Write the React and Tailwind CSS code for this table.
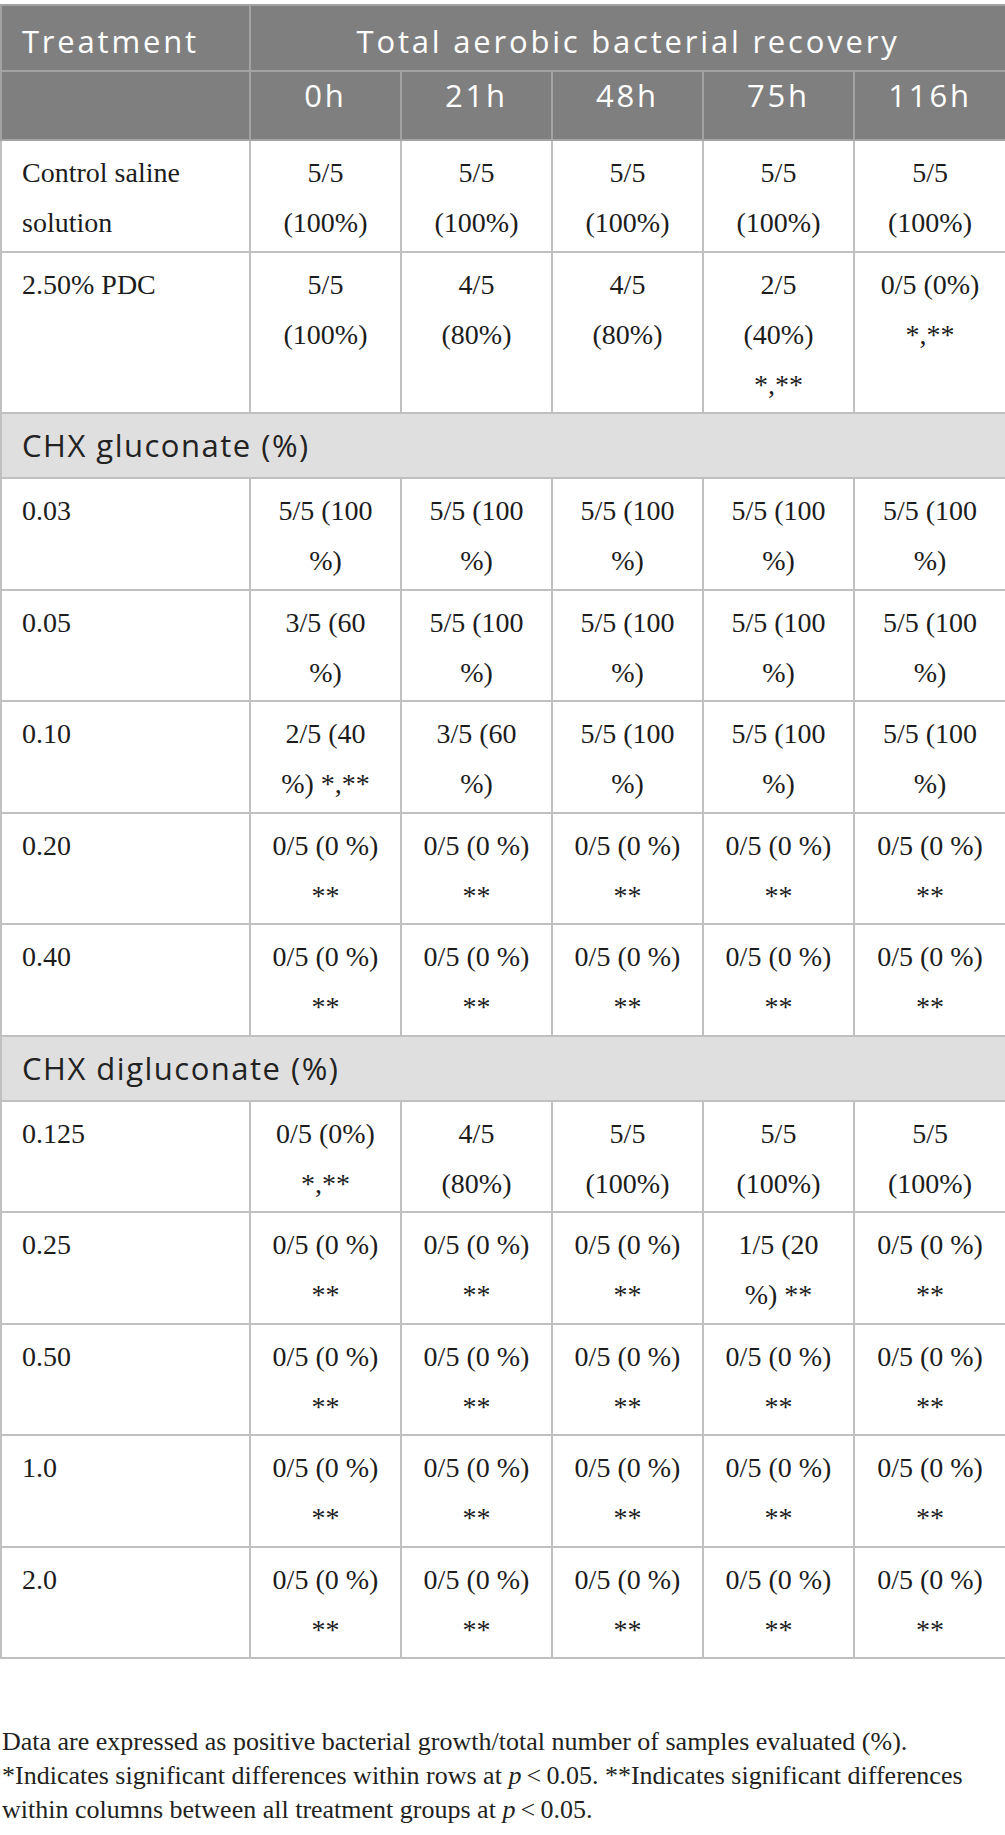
import React from "react";

const times = ["0h", "21h", "48h", "75h", "116h"];

const all = (v) => [v, v, v, v, v];

// each entry: [label, [cells]] or a section title string
const rows = [
  ["Control saline\nsolution", all("5/5\n(100%)")],
  ["2.50% PDC", ["5/5\n(100%)", "4/5\n(80%)", "4/5\n(80%)", "2/5\n(40%)\n*,**", "0/5 (0%)\n*,**"]],
  "CHX gluconate (%)",
  ["0.03", all("5/5 (100\n%)")],
  ["0.05", ["3/5 (60\n%)", "5/5 (100\n%)", "5/5 (100\n%)", "5/5 (100\n%)", "5/5 (100\n%)"]],
  ["0.10", ["2/5 (40\n%) *,**", "3/5 (60\n%)", "5/5 (100\n%)", "5/5 (100\n%)", "5/5 (100\n%)"]],
  ["0.20", all("0/5 (0 %)\n**")],
  ["0.40", all("0/5 (0 %)\n**")],
  "CHX digluconate (%)",
  ["0.125", ["0/5 (0%)\n*,**", "4/5\n(80%)", "5/5\n(100%)", "5/5\n(100%)", "5/5\n(100%)"]],
  ["0.25", ["0/5 (0 %)\n**", "0/5 (0 %)\n**", "0/5 (0 %)\n**", "1/5 (20\n%) **", "0/5 (0 %)\n**"]],
  ["0.50", all("0/5 (0 %)\n**")],
  ["1.0", all("0/5 (0 %)\n**")],
  ["2.0", all("0/5 (0 %)\n**")],
];

const sans = "font-['Open_Sans',sans-serif]";
const serif = "font-['Liberation_Serif',serif]";

function App() {
  return (
    <div className="w-[1005px] bg-white pt-[4px] text-[#1c1c1c]">
      <table className="w-full table-fixed border-collapse">
        <colgroup>
          <col className="w-[249px]" />
          <col className="w-[151px]" />
          <col className="w-[151px]" />
          <col className="w-[151px]" />
          <col className="w-[151px]" />
          <col className="w-[152px]" />
        </colgroup>
        <thead className={`${sans} bg-[#7f7f7f] text-white text-[31px] tracking-[2.8px]`}>
          <tr>
            <th className="border-2 border-[#a3a3a3] pl-[20px] pt-[15px] pb-[9px] text-left font-normal leading-[40px]">
              Treatment
            </th>
            <th colSpan={5} className="border-2 border-[#a3a3a3] pt-[15px] pb-[9px] text-center font-normal leading-[40px]">
              Total aerobic bacterial recovery
            </th>
          </tr>
          <tr>
            <th className="border-2 border-[#a3a3a3] h-[69px]" />
            {times.map((t) => (
              <th key={t} className="border-2 border-[#a3a3a3] pt-[3px] pb-[24px] text-center font-normal leading-[40px]">
                {t}
              </th>
            ))}
          </tr>
        </thead>
        <tbody>
          {rows.map((r) =>
            typeof r === "string" ? (
              <tr key={r} className="bg-[#e0dfe0]">
                <td colSpan={6} className={`${sans} border-2 border-[#c0c0c0] pl-[20px] pt-[11px] pb-[12px] text-[31px] leading-[40px] tracking-[1.5px] text-[#222]`}>
                  {r}
                </td>
              </tr>
            ) : (
              <tr key={r[0]} className={`${serif} text-[28px] leading-[50px]`}>
                <td className="border-2 border-[#c0c0c0] pl-[20px] pt-[7px] pb-[2.5px] align-top whitespace-pre-line">
                  {r[0]}
                </td>
                {r[1].map((c, i) => (
                  <td key={i} className="border-2 border-[#c0c0c0] pt-[7px] pb-[2.5px] text-center align-top whitespace-pre-line">
                    {c}
                  </td>
                ))}
              </tr>
            )
          )}
        </tbody>
      </table>

      <div className={`${serif} mt-[66px] pl-[2px] pb-[10px] text-[26px] leading-[34px] text-[#231f20] whitespace-nowrap`}>
        <p>Data are expressed as positive bacterial growth/total number of samples evaluated (%).</p>
        <p>
          *Indicates significant differences within rows at <i>p</i>&thinsp;&lt;&thinsp;0.05. **Indicates significant differences
        </p>
        <p>
          within columns between all treatment groups at <i>p</i>&thinsp;&lt;&thinsp;0.05.
        </p>
      </div>
    </div>
  );
}

export default App;
